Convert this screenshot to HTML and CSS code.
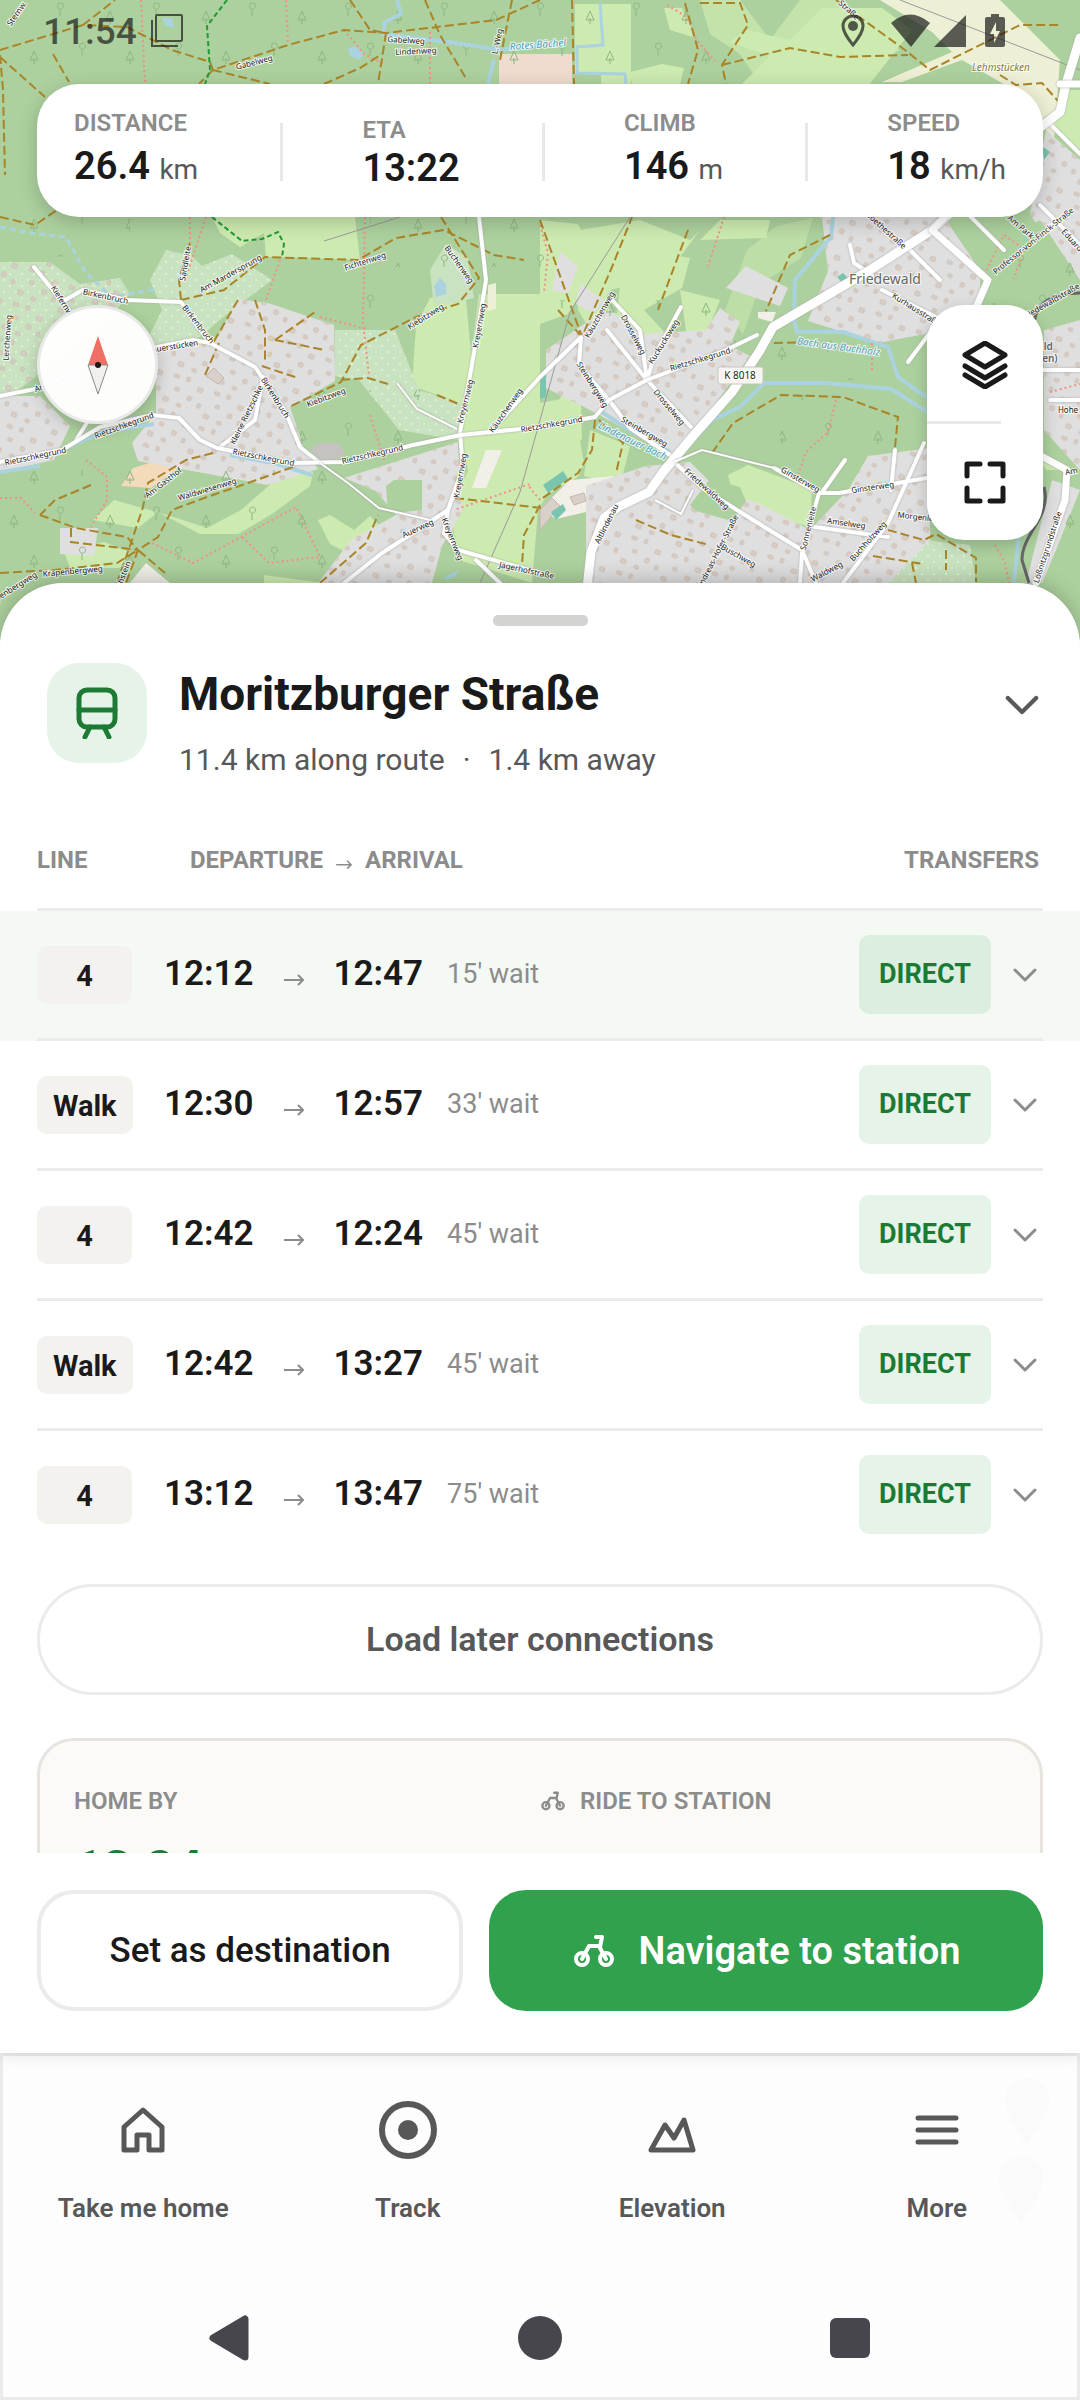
FILE: index.html
```html
<!DOCTYPE html>
<html lang="en">
<head>
    <meta charset="UTF-8">
    <meta name="viewport" content="width=device-width, initial-scale=1.0">
    <title>Moritzburger Straße</title>
    <link rel="stylesheet" href="styles.css">
</head>
<body>
    <!-- Shared icons -->
    <svg class="sprite" aria-hidden="true">
        <symbol id="chevron" viewBox="0 0 24 24"><path d="M2 7l10 10 10-10"/></symbol>
        <symbol id="arrow" viewBox="0 0 20 28"><path d="M0 20h19M14 15l5 5-5 5"/></symbol>
        <symbol id="bike" viewBox="0 0 44 36">
            <circle cx="10" cy="26" r="6"/>
            <circle cx="34" cy="26" r="6"/>
            <path d="M10 26l7-13h10l7 13M28 14l2-10h-6"/>
        </symbol>
    </svg>

    <div class="app">
        <!-- Map with everything that floats over it -->
        <section class="map-area">
            <svg class="map" viewBox="0 0 1080 640" preserveAspectRatio="xMidYMin slice" role="img" aria-label="Map of Friedewald">
                <defs>
                    <pattern id="trees" width="96" height="84" patternUnits="userSpaceOnUse">
                        <path class="tree" d="M14 24v-6m-4 2l4-9 4 9zM60 16v-7m0 0a3 3 0 1 1 1 0M34 64v-6m-4 2l4-9 4 9zM82 56v-7m0 0a3 3 0 1 1 1 0"/>
                    </pattern>
                    <pattern id="houses" width="44" height="38" patternUnits="userSpaceOnUse" patternTransform="rotate(24)">
                        <path class="house" d="M4 4h5v3h-5zM17 2h3v4h-3zM31 7h5v4h-5zM10 16h4v3h-4zM25 19h4v4h-4zM37 22h3v4h-3zM3 29h5v4h-5zM18 30h4v3h-4z"/>
                    </pattern>
                    <pattern id="dots" width="12" height="12" patternUnits="userSpaceOnUse">
                        <path d="M3 3h2v2h-2zM9 9h2v2h-2z" fill="#ddf0d4"/>
                    </pattern>
                </defs>
                <rect width="1080" height="640" fill="#add19e"/>

                <!-- Meadows and fields -->
                <g fill="#cdebb0">
                    <path d="M212 217h143l5 43-80-3-14 0-2-24-24 14-20-14z"/>
                    <path d="M575 4h56v80h-30v-10h-26z"/>
                    <path d="M630 72l32-8 22 4-4 16h-48zM664 8h18l14 30-26-8zM746 30l44 10 32-32 60 0 30 22-44 56h-128l30-30-40-14z"/>
                    <path d="M700 0h40l30 40 30-40h40l60 50-60 34h-80l-20-30-30-20z" opacity=".7"/>
                    <path d="M430 298l35-10 6 66 8-60h61v140l-78 6-10-40-40-14 4-60z"/>
                    <path d="M462 440l78-12 40-60 2 70-44 72-6 73-70-22-14-50 20-40z"/>
                    <path d="M93 520l21-20 50 14 43 14 34-18 48-42 24 4-3 14-38 28-34 20h-38l-42-22-20 16z"/>
                    <path d="M540 220l38 4 20 40-30 50-28 10zM622 270l20-20 48 8-8 30-38 22 22 24-26 20-24-34zM680 290l40 10-20 50-12-6zM700 240l20-20h50l-4 18z"/>
                    <path d="M580 230l60-10 50 20 10-10-34 46-56 14-20 40-12-20z"/>
                    <path d="M725 310l22-60 30-24 36-8-12 40-40 26-18 50z" opacity=".5"/>
                    <path d="M540 403l32-6 12 66-6 14-38 22zM590 430l40 16-10 40-36-10z"/>
                    <path d="M728 475l20-10 64 24-2 38-74-20zM760 560l10-40h28l-20 63h-16zM604 546l30-6 40 26-10 17h-74z"/>
                    <path d="M318 520l12-5 24 15 16-14 10 10-30 28-20-10z"/>
                    <path d="M1052 130l28 20v-60h-20zM1040 460l20 10-14 0z"/>
                    <path d="M64 552l40-10 26 10-10 16h-50zM264 575l60 8h-60z"/>
                </g>
                <path fill="#eef0d5" d="M880 0h120l60 60-6 80-40-50-52-30-60 22h-20l70-30-20-20z"/>
                <path fill="#eef0d5" d="M488 285l8-2v26l-8 2z"/>
                <path fill="#f2efe9" d="M486 450h16l-16 38h-14zM570 480l56-5-10 30-60 14-16-10zM0 424l14 8 2 12-16 4zM130 583l16-20 24 20zM758 312h18l-4 10-14-4z"/>
                <path fill="#f2dabb" d="M121 486l12-18 20-6 28 4-30 22z"/>
                <path fill="#f0dccf" d="M499 54h73v30h-73z"/>

                <!-- Gardens -->
                <g>
                    <path fill="#c9e2bf" d="M0 262h50l30 22 40-6 10 16-26 30-104 80zM150 280l16-30 26 6 10 10 30-12 40 26-40 30-60 50-30-10 20-40zM430 270l16-26 22 14 6 40-40 10zM335 330h60l24 60 44 14-4 36-60-10-40-50-24-4zM850 583l30-48 90 10 6 38z"/>
                    <path fill="url(#dots)" d="M0 262h50l30 22 40-6 10 16-26 30-104 80zM150 280l16-30 26 6 10 10 30-12 40 26-40 30-60 50-30-10 20-40zM335 330h60l24 60 44 14-4 36-60-10-40-50-24-4zM850 583l30-48 90 10 6 38z"/>
                </g>

                <!-- Built-up areas -->
                <g>
                    <path fill="#e0dfdf" d="M156 347l59-6 23-42 30 4 66 22 1 56-45 26 14 42 14 20-50 16-130-24-6-18 24-30zM0 396l40 0 30 30-16 34-54 12zM344 478l114-36 4 70-20 34-10 37h-114l34-44 44-24-20-24zM546 350l62-42 34 26 64-4 14-22 20 14-10 24 20 10-58 80-18 20-84-46-44-22zM586 486l60-20 44-4 26 26 44 16 50 26 38-40 20-34 62-8v92l-60 62H586zM822 217h122l42 62-14 40-32 12-62 12-70-22 20-50zM746 266l42 22-8 18-54-18zM560 252l18 14-10 28-16-4zM580 284l24 16-10 14-18-10zM1046 130l34 30v150l-20 20-16-20 16-50-30-46zM1044 320h36v150l-36-40zM60 528h38l-4 28-34-2zM1052 480l28 10-24 60-14 33h-16z"/>
                    <path fill="url(#houses)" d="M156 347l59-6 23-42 30 4 66 22 1 56-45 26 14 42 14 20-50 16-130-24-6-18 24-30zM0 396l40 0 30 30-16 34-54 12zM0 262h50l30 22 40-6 10 16-26 30-104 80zM344 478l114-36 4 70-20 34-10 37h-114l34-44 44-24-20-24zM546 350l62-42 34 26 64-4 14-22 20 14-10 24 20 10-58 80-18 20-84-46-44-22zM586 486l60-20 44-4 26 26 44 16 50 26 38-40 20-34 62-8v92l-60 62H586zM822 217h122l42 62-14 40-32 12-62 12-70-22 20-50zM1046 130l34 30v150l-20 20-16-20 16-50-30-46zM1044 320h36v150l-36-40z"/>
                </g>
                <path fill="#add19e" d="M386 486l8-6h28v30l-34 4zM980 250l60-30 40 60v40l-70 20-30-20zM690 505l20-26 30 8 6 14-14 20-36-10z"/>
                <path fill="#c5c3c0" d="M310 448l10-5h18l7 10-8 8-20-2z"/>
                <path fill="#d9d0c9" stroke="#c4b6ab" d="M540 510l12-12 8 8-20 24zM206 376l8-8 10 10-6 6zM570 497l14-4 2 8-12 4z"/>
                <path fill="url(#trees)" d="M0 0h720v84H0zM0 217h130v40H0zM370 217h180v50h-180zM360 290h50v50h-50zM300 390h120v60h-120zM0 470h330v113H0zM780 395h110v65h-110zM730 340h130v40h-130zM980 250h100v60h-100zM560 300h180v20h-180zM1050 480h30v100h-30z"/>

                <!-- Water -->
                <g class="water">
                    <path d="M397 0l4 14-16 8-2 12 80 10 38 6 40-6M494 60l-6 24M60 450l44-18 50-8M0 472l40-6M230 455l44 8 38 12M833 217l-2 20-36 43-1 40 3 12h46l45 15 10 30 28 20M678 457l34-37 28-13 24-24h62l65 6 35 22M602 412l30 20 38 20M1014 583l6-60 22-40"/>
                    <path class="ditch" d="M600 3l3 42-26 2v26l48 1 1 12"/>
                </g>
                <path class="brook" d="M0 227l30 6 36 4 20 36 26 24 44-8"/>
                <path fill="#aad3df" d="M348 48l8-2 8 8-4 6-10-4zM434 286l6-8 6 6v10l-10 3zM444 578l14-8-2 6-10 4zM162 18h10l2 10-8-2z"/>
                <path fill="#7ac5b0" d="M543 485l20-14 5 8-20 14zM551 512l12-8 3 6-10 10zM540 376l6-3v24l-6 2zM837 277l6-4 8 8-3 8zM1042 146l8 6-6 8z"/>

                <!-- Footpaths -->
                <path class="path" d="M141 0l4 84M286 0l2 45M430 32v52M344 30l20 24 20 10M667 5l20 12 10 24 18 20M190 217v26M206 217l-22 66M365 217l-2 106 6 52M540 225l8 28-4 40M0 498h21l14 15M86 460l21 17v23l-16 27M152 543l41 20 48-26 55-30 24 50-51 6-28-27M320 317l46 12M370 415l14 45M724 217l-16 50M836 400l-8 32-22 20-8 24M872 370v-30M984 275l20-40 20 14-10 30M995 545l10 18 4 20M1050 392l30-8M280 260l-14 40M540 500l-10-12 0-4-76 26"/>

                <!-- Forest tracks -->
                <g class="track-line">
                    <path d="M0 50l83-25 44 2 45 23 38 12 3 8 75-25 56-15 42 3 110-13 44-20M213 70l57 14M213 70l-14 14M83 25l32-25M350 0l20 30 16 3-8 51M425 0l15 35 27 45M512 0l-12 60M324 84l36-16 22-14M0 55l3 35 2 85M0 57l45 40M53 54l16 28M572 0l2 84M685 3l13 47-10 34M700 3l40 0 8 22-26 40 4 19M722 65l68-17 50 9 68-2M836 0l69 50 25 20 70-35 20-10h40M1000 75l16 10 26-2 16 18M0 217l35 8 22-15M181 300l43-10 41-33 93 3 38-22 48-8 50 25 30 5M181 300l-2-20 11-37M441 217l38 61-21 26-42 13-55 28-20 37-52 25M238 300l-25 43M255 300l10 30v33M275 340l40-28M275 340l50 10M262 366l36 12M341 380l27-2 20 6M205 375l14-32M437 395l24 10M293 467l-45 16-41 14-35 13-14 27-20 13-12 33M213 453l-27 7-38 23-5 24-12 36-14 40M40 515l36 13 51 9 11 13M71 528v14l67 8M91 485l-36 15-15 15M0 573l55-3 62-7 21-13 27 23M774 343l41-1M712 453l21-30 48-28 62 2 55 20-3 30M636 520l35 15 38 10M595 420l-3 30-14 23-38 27M599 420l24 23-7 30M540 220l42 117 30-70 20-50M688 230l-30 80M830 235l-40 20-24 56M558 310l24 27M320 583l46-40 12-28M455 498l86 10M540 505l-16 30-2 30M873 556l50 8M912 563l4 20M888 530l36 10 12-6 40 24v24M946 550v20"/>
                </g>
                <path class="hike" d="M227 0l-20 26 3 44-5 14M212 217l30 24 20-2 16-7 6 12-2 13"/>
                <path class="power" d="M630 217l-60 95-50 180-40 91M400 217l-76 24M900 0l180 70"/>

                <!-- Roads -->
                <g class="roads">
                    <path d="M34 267l35 43M65 300l18-10 44 10 54 2 12 18 17 23 45 24 31 46 14 34 20 16M157 347l36-7 17 3M263 377l-8 43-35 27M76 440l14-22M0 396l40-8M489 433l51-56 41-40M612 300l28 30 7 50 44 47M607 330l40 50M647 380l7-23 27-50M581 337l-2 28 30 35 21 28 40 27M674 462l31 28 48 30 49 30 14 33M774 468l45 25h20l88-15M819 493l-17 60-2 30M924 443l-36 80-45 60M845 460l-22 31M895 450l-4 40M815 527l73 10M944 190l60 60M1040 205l40 40M1046 120l34 34M910 250l30 30M850 245l4 18 18 12M882 290l60 30M938 322l-30 40M479 217l7 63-11 67-15 86 3 34-15 43-4 23 14 17 82 23M448 510l-35 23-31 20-38 30M1050 400h30M1044 370h36M476 560l24 23"/>
                    <path d="M0 462l62-12 38-23 52-12 27 3 21 22 17 8 76 15 51-1 69-17 48-10 79-8 55-10 14-17 38-20 79-30 31-15"/>
                    <path class="trunk" d="M1080 38l-14 46-6 28-18 14-110 104-62 40-97 57-14 25-27 40-38 43-31 37-14 20-31 15-14 11-13 34-4 36"/>
                    <path class="side" d="M1060 84h20M945 217l-13 13 56 50-13 30-5 30M1043 457l24 13-2 30-29 83"/>
                </g>
                <path class="lane" d="M320 463l28 20 31 25 51 12M397 383l20 26 40 20M702 450l72 18M674 462l28-12M655 500l26 14 12-24"/>
                <path class="rail" d="M1034 323c2-20 18-30 46-30M1044 487c8 30-22 46-22 73l7 23"/>

                <!-- Names -->
                <g class="names">
                    <text transform="translate(19 15) rotate(-55)">Sternw.</text>
                    <text transform="translate(255 65) rotate(-15)">Gabelweg</text>
                    <text transform="translate(406 43) rotate(3)">Gabelweg</text>
                    <text transform="translate(416 54) rotate(-3)">Lindenweg</text>
                    <text transform="translate(500 42) rotate(-78)">L.-Weg</text>
                    <text transform="translate(847 12) rotate(42)">Straße</text>
                    <text transform="translate(188 264) rotate(-80)">Sandleite</text>
                    <text transform="translate(232 276) rotate(-29)">Am Mardersprung</text>
                    <text transform="translate(366 264) rotate(-18)">Fichtenweg</text>
                    <text transform="translate(457 266) rotate(55)">Buchenweg</text>
                    <text transform="translate(105 299) rotate(12)">Birkenbruch</text>
                    <text transform="translate(62 306) rotate(58)">Kiefernweg</text>
                    <text transform="translate(10 338) rotate(-86)">Lerchenweg</text>
                    <text transform="translate(60 384) rotate(-18)">Am Lärmberg</text>
                    <text transform="translate(168 350) rotate(-9)">Am Auerstücken</text>
                    <text transform="translate(196 326) rotate(52)">Birkenbruch</text>
                    <text transform="translate(273 399) rotate(58)">Birkenbruch</text>
                    <text transform="translate(427 319) rotate(-32)">Kiebitzweg</text>
                    <text transform="translate(327 400) rotate(-21)">Kiebitzweg</text>
                    <text transform="translate(249 416) rotate(-64)">Kleine Rietzschke</text>
                    <text transform="translate(125 428) rotate(-20)">Rietzschkegrund</text>
                    <text transform="translate(36 459) rotate(-12)">Rietzschkegrund</text>
                    <text transform="translate(263 460) rotate(11)">Rietzschkegrund</text>
                    <text transform="translate(373 457) rotate(-13)">Rietzschkegrund</text>
                    <text transform="translate(552 427) rotate(-10)">Rietzschkegrund</text>
                    <text transform="translate(701 362) rotate(-17)">Rietzschkegrund</text>
                    <text transform="translate(165 485) rotate(-38)">Am Gasthof</text>
                    <text transform="translate(208 492) rotate(-17)">Waldwiesenweg</text>
                    <text transform="translate(482 326) rotate(-80)">Kreyernweg</text>
                    <text transform="translate(468 402) rotate(-76)">Kreyernweg</text>
                    <text transform="translate(463 476) rotate(-80)">Kreyernweg</text>
                    <text transform="translate(450 540) rotate(68)">Kreyernweg</text>
                    <text transform="translate(508 412) rotate(-55)">Käuzchenweg</text>
                    <text transform="translate(602 316) rotate(-60)">Käuzchenweg</text>
                    <text transform="translate(419 531) rotate(-25)">Auerweg</text>
                    <text transform="translate(526 573) rotate(12)">Jägerhofstraße</text>
                    <text transform="translate(73 574) rotate(-5)">Krapenbergweg</text>
                    <text transform="translate(12 592) rotate(-32)">Krapenbergweg</text>
                    <text transform="translate(124 580) rotate(-68)">Hochstein</text>
                    <text transform="translate(631 336) rotate(62)">Drosselweg</text>
                    <text transform="translate(667 409) rotate(50)">Drosselweg</text>
                    <text transform="translate(666 343) rotate(-58)">Kuckucksweg</text>
                    <text transform="translate(590 386) rotate(58)">Steinbergweg</text>
                    <text transform="translate(643 434) rotate(30)">Steinbergweg</text>
                    <text transform="translate(609 525) rotate(-63)">Altlindenau</text>
                    <text transform="translate(705 491) rotate(42)">Friedewaldweg</text>
                    <text transform="translate(720 553) rotate(-63)">Andreas-Hofer-Straße</text>
                    <text transform="translate(737 558) rotate(30)">Buschweg</text>
                    <text transform="translate(799 482) rotate(30)">Ginsterweg</text>
                    <text transform="translate(873 490) rotate(-8)">Ginsterweg</text>
                    <text transform="translate(811 529) rotate(-76)">Sonnenleite</text>
                    <text transform="translate(846 526) rotate(8)">Amselweg</text>
                    <text transform="translate(920 520) rotate(6)">Morgenleite</text>
                    <text transform="translate(870 543) rotate(-48)">Buchholzweg</text>
                    <text transform="translate(828 574) rotate(-28)">Waldweg</text>
                    <text transform="translate(915 312) rotate(32)">Kurhausstraße</text>
                    <text transform="translate(884 232) rotate(42)">Goethestraße</text>
                    <text transform="translate(1019 229) rotate(40)">Am Park</text>
                    <text transform="translate(1035 243) rotate(-39)">Professor-von-Finck-Straße</text>
                    <text transform="translate(1070 242) rotate(48)">Eduard</text>
                    <text transform="translate(1052 304) rotate(-30)">Friedewaldstraße</text>
                    <text transform="translate(1068 413)">Hohe</text>
                    <text transform="translate(1072 474) rotate(-12)">Am</text>
                    <text transform="translate(1050 548) rotate(-72)">Lößnitzgrundstraße</text>
                    <text class="place" x="885" y="284">Friedewald</text>
                    <text class="halt" x="1026" y="350">Friedewald</text>
                    <text class="halt" x="1034" y="362">(Dresden)</text>
                    <text class="field" x="1001" y="71">Lehmstücken</text>
                    <text class="stream" transform="translate(538 48) rotate(-4)">Rotes Bächel</text>
                    <text class="stream" transform="translate(838 350) rotate(8)">Bach aus Buchholz</text>
                    <text class="stream" transform="translate(631 444) rotate(26)">Lindenauer Bach</text>
                    <rect class="shield" x="718" y="367" width="45" height="17" rx="2"/>
                    <text class="ref" x="740" y="379">K 8018</text>
                </g>
            </svg>

            <div class="overlay">
                <div class="status-bar">
                    <div class="status-left">
                        <span>11:54</span>
                        <svg class="status-icon" viewBox="0 0 32 34" fill="none" stroke="currentColor" stroke-width="2"><rect x="5" y="1" width="26" height="26" rx="1"/><path d="M1 6v26h26"/></svg>
                    </div>
                    <div class="status-right">
                        <svg class="pin" viewBox="0 0 24 34"><path d="M12 2a10 10 0 0 0-10 10c0 7 10 19 10 19s10-12 10-19a10 10 0 0 0-10-10z" fill="none" stroke="currentColor" stroke-width="3"/><circle cx="12" cy="12" r="5" fill="currentColor"/></svg>
                        <svg class="signal" viewBox="0 0 76 34" fill="currentColor"><path d="M0 9Q19-8 39 9L20 33zM75 1v32H43z"/></svg>
                        <svg class="battery" viewBox="0 0 20 34"><path fill="currentColor" fill-rule="evenodd" d="M6 0h8v3h4q2 0 2 2v26q0 2-2 2H2q-2 0-2-2V5q0-2 2-2h4zM11 8l-6 12h4v9l6-12h-4z"/></svg>
                    </div>
                </div>

                <div class="stats">
                    <div class="stat">
                        <span class="label">DISTANCE</span>
                        <span class="stat-value">26.4 <small>km</small></span>
                    </div>
                    <div class="stat">
                        <span class="label">ETA</span>
                        <span class="stat-value plain">13:22</span>
                    </div>
                    <div class="stat">
                        <span class="label">CLIMB</span>
                        <span class="stat-value">146 <small>m</small></span>
                    </div>
                    <div class="stat">
                        <span class="label">SPEED</span>
                        <span class="stat-value">18 <small>km/h</small></span>
                    </div>
                </div>

                <div class="map-controls">
                    <button class="compass" type="button" aria-label="Reset north">
                        <svg viewBox="0 0 24 60"><path d="M12 1L2 30h20z" fill="#f07067"/><path d="M2 30l10 29 10-29z" fill="#f2f0ec" stroke="#8a8a8a"/><circle cx="12" cy="30" r="3" fill="#1a1a1a"/></svg>
                    </button>
                    <div class="map-tools">
                        <button type="button" aria-label="Map layers">
                            <svg viewBox="0 0 46 48"><path d="M23 2L3 14l20 12 20-12zM3 25l20 12 20-12M3 34l20 12 20-12"/></svg>
                        </button>
                        <button type="button" aria-label="Full screen">
                            <svg viewBox="0 0 46 48"><path d="M5 18V6h13M28 6h13v12M41 30v13H28M18 43H5V30"/></svg>
                        </button>
                    </div>
                </div>
            </div>
        </section>

        <!-- Station sheet -->
        <main class="sheet">
            <div class="handle"></div>

            <div class="sheet-scroll">
                <header class="station">
                    <div class="station-icon">
                        <svg viewBox="0 0 44 52"><rect x="4" y="3" width="36" height="37" rx="8"/><path d="M4 23h36M15 40l-5 10M29 40l5 10"/></svg>
                    </div>
                    <div class="station-text">
                        <h1>Moritzburger Straße</h1>
                        <p><span>11.4 km along route</span><span>·</span><span>1.4 km away</span></p>
                    </div>
                    <button class="icon-button" type="button" aria-label="Collapse">
                        <svg class="chevron large"><use href="#chevron"/></svg>
                    </button>
                </header>

                <table class="departures">
                    <thead>
                        <tr>
                            <th class="col-line" scope="col">LINE</th>
                            <th class="col-times" scope="col"><div class="route-head">DEPARTURE<svg class="arrow small"><use href="#arrow"/></svg>ARRIVAL</div></th>
                            <th class="col-transfers" scope="col">TRANSFERS</th>
                        </tr>
                    </thead>
                    <tbody>
                        <tr class="best">
                            <td><span class="line">4</span></td>
                            <td><div class="times"><b>12:12</b><svg class="arrow"><use href="#arrow"/></svg><b>12:47</b><span class="wait">15' wait</span></div></td>
                            <td><div class="transfers"><span class="direct">DIRECT</span><button class="icon-button" type="button" aria-label="Details"><svg class="chevron"><use href="#chevron"/></svg></button></div></td>
                        </tr>
                        <tr>
                            <td><span class="line">Walk</span></td>
                            <td><div class="times"><b>12:30</b><svg class="arrow"><use href="#arrow"/></svg><b>12:57</b><span class="wait">33' wait</span></div></td>
                            <td><div class="transfers"><span class="direct">DIRECT</span><button class="icon-button" type="button" aria-label="Details"><svg class="chevron"><use href="#chevron"/></svg></button></div></td>
                        </tr>
                        <tr>
                            <td><span class="line">4</span></td>
                            <td><div class="times"><b>12:42</b><svg class="arrow"><use href="#arrow"/></svg><b>12:24</b><span class="wait">45' wait</span></div></td>
                            <td><div class="transfers"><span class="direct">DIRECT</span><button class="icon-button" type="button" aria-label="Details"><svg class="chevron"><use href="#chevron"/></svg></button></div></td>
                        </tr>
                        <tr>
                            <td><span class="line">Walk</span></td>
                            <td><div class="times"><b>12:42</b><svg class="arrow"><use href="#arrow"/></svg><b>13:27</b><span class="wait">45' wait</span></div></td>
                            <td><div class="transfers"><span class="direct">DIRECT</span><button class="icon-button" type="button" aria-label="Details"><svg class="chevron"><use href="#chevron"/></svg></button></div></td>
                        </tr>
                        <tr>
                            <td><span class="line">4</span></td>
                            <td><div class="times"><b>13:12</b><svg class="arrow"><use href="#arrow"/></svg><b>13:47</b><span class="wait">75' wait</span></div></td>
                            <td><div class="transfers"><span class="direct">DIRECT</span><button class="icon-button" type="button" aria-label="Details"><svg class="chevron"><use href="#chevron"/></svg></button></div></td>
                        </tr>
                    </tbody>
                </table>

                <button class="load-more" type="button">Load later connections</button>

                <div class="summary">
                    <div>
                        <div class="label">HOME BY</div>
                        <div class="home-time">13:24</div>
                    </div>
                    <div>
                        <div class="label with-icon"><svg class="bike small"><use href="#bike"/></svg>RIDE TO STATION</div>
                    </div>
                </div>
            </div>

            <div class="actions">
                <button class="secondary" type="button">Set as destination</button>
                <button class="primary" type="button"><svg class="bike"><use href="#bike"/></svg>Navigate to station</button>
            </div>
        </main>

        <!-- Bottom navigation -->
        <footer class="bottom">
            <nav class="tabs">
                <a href="#home">
                    <svg viewBox="0 0 60 60"><path d="M30 10L11 27v23h13V35h12v15h13V27z"/></svg>
                    Take me home
                </a>
                <a href="#track">
                    <svg viewBox="0 0 60 60"><circle cx="30" cy="30" r="26" stroke-width="6"/><circle cx="30" cy="30" r="10" fill="currentColor" stroke="none"/></svg>
                    Track
                </a>
                <a href="#elevation">
                    <svg viewBox="0 0 60 60"><path d="M9 50l14-25 9 13 10-18 9 30z"/></svg>
                    Elevation
                </a>
                <a href="#more">
                    <svg viewBox="0 0 60 60"><path d="M11 18h38M11 30h38M11 42h38"/></svg>
                    More
                </a>
            </nav>
            <div class="system-nav">
                <button type="button" aria-label="Back"><svg viewBox="0 0 46 46"><path d="M6 23L38 4v38z" stroke="currentColor" stroke-width="7" stroke-linejoin="round"/></svg></button>
                <button type="button" aria-label="Home"><svg viewBox="0 0 46 46"><circle cx="23" cy="23" r="22"/></svg></button>
                <button type="button" aria-label="Recents"><svg viewBox="0 0 46 46"><rect x="3" y="3" width="40" height="40" rx="6"/></svg></button>
            </div>
            <!-- Map pins showing through the bar -->
            <svg class="pins" viewBox="0 0 60 150" aria-hidden="true"><path d="M34 70C20 46 12 38 12 24a22 22 0 0 1 44 0c0 14-8 22-22 46zM28 148C14 124 6 116 6 102a22 22 0 0 1 44 0c0 14-8 22-22 46z"/></svg>
        </footer>
    </div>
</body>
</html>
```
FILE: styles.css
```css
* {
    box-sizing: border-box;
}

body {
    margin: 0;
    font-family: Roboto, "Liberation Sans", sans-serif;
    color: #1a1a1a;
    background-color: #fff;
}

button {
    padding: 0;
    border: none;
    background: none;
    font-family: inherit;
    color: inherit;
    cursor: pointer;
}

svg {
    display: block;
}

.sprite {
    position: absolute;
    width: 0;
    height: 0;
}

.app {
    display: flex;
    flex-direction: column;
    height: 100vh;
}

/* Map */
.map-area {
    display: grid;
    flex: none;
}

.map,
.overlay {
    grid-area: 1 / 1;
}

.map {
    width: 100%;
    height: 640px;
}

.tree {
    fill: none;
    stroke: #8bb680;
    stroke-width: 1;
}

.house {
    fill: #d9d0c9;
    stroke: #cdbfb3;
}

.water path {
    fill: none;
    stroke: #aad3df;
    stroke-width: 4;
}

.water .ditch {
    stroke-width: 3;
}

.brook {
    fill: none;
    stroke: #aad3df;
    stroke-width: 3;
    stroke-dasharray: 6 4;
}

.path {
    fill: none;
    stroke: #ef9184;
    stroke-width: 2;
    stroke-dasharray: 2 3;
}

.track-line path {
    fill: none;
    stroke: #a98428;
    stroke-width: 2;
    stroke-dasharray: 9 4;
}

.hike {
    fill: none;
    stroke: #1f9a33;
    stroke-width: 2;
    stroke-dasharray: 5 3;
}

.power {
    fill: none;
    stroke: #9a9a9a;
}

.roads path {
    fill: none;
    stroke: #fff;
    stroke-width: 4;
    stroke-linecap: round;
    stroke-linejoin: round;
    filter: drop-shadow(0 0 1px #aaa);
}

.roads .trunk {
    stroke-width: 9;
}

.roads .side {
    stroke-width: 7;
}

.lane {
    fill: none;
    stroke: #fff;
    stroke-width: 2;
    filter: drop-shadow(0 0 1px #999);
}

.rail {
    fill: none;
    stroke: #666;
    stroke-width: 3;
}

.names text {
    font-family: "Noto Sans", sans-serif;
    font-size: 8px;
    text-anchor: middle;
    fill: #222;
    stroke: rgba(255, 255, 255, 0.8);
    stroke-width: 2;
    paint-order: stroke;
}

.names .place {
    font-size: 14px;
    fill: #666;
}

.names .halt {
    font-size: 10px;
    font-weight: 600;
    fill: #666;
}

.names .ref {
    font-size: 10px;
}

.names .field {
    font-size: 10px;
    font-style: italic;
    fill: #8a7a3c;
}

.names .stream {
    font-size: 10px;
    font-style: italic;
    fill: #4a9fc0;
}

.names .shield {
    fill: #f7f5f2;
    stroke: #c9c5be;
}

/* Status bar */
.overlay {
    z-index: 1;
    display: flex;
    flex-direction: column;
    padding: 0 37px;
}

.status-bar {
    display: flex;
    justify-content: space-between;
    align-items: center;
    height: 84px;
    padding: 0 38px 22px 6px;
    font-size: 37px;
    font-weight: 500;
    color: rgba(25, 25, 25, 0.7);
}

.status-left,
.status-right {
    display: flex;
    align-items: center;
}

.status-left {
    gap: 14px;
}

.status-icon {
    width: 32px;
    height: 34px;
}

.pin {
    width: 24px;
    height: 34px;
    margin-right: 26px;
}

.signal {
    width: 76px;
    height: 34px;
    margin-right: 18px;
}

.battery {
    width: 20px;
    height: 34px;
}

/* Ride stats */
.stats {
    display: flex;
    justify-content: space-between;
    align-items: center;
    height: 133px;
    padding: 6px 37px 0;
    border-radius: 42px;
    background-color: #fff;
    box-shadow: 0 5px 20px rgba(0, 0, 0, 0.2);
}

.stat {
    display: flex;
    flex-direction: column;
}

.stat + .stat {
    position: relative;
}

.stat + .stat::before {
    content: "";
    position: absolute;
    top: 50%;
    left: -82px;
    width: 3px;
    height: 58px;
    margin-top: -31px;
    background-color: #e8e8e8;
}

.label {
    font-size: 24px;
    line-height: 28px;
    font-weight: 600;
    color: #8c8c8c;
}

.stat-value {
    font-size: 38px;
    line-height: 58px;
    font-weight: 600;
}

.stat-value.plain {
    line-height: 48px;
}

.stat-value small {
    font-size: 28px;
    font-weight: 400;
    color: #585858;
}

/* Compass and map buttons */
.map-controls {
    display: flex;
    justify-content: space-between;
    align-items: flex-start;
    margin-top: 88px;
}

.compass {
    display: flex;
    justify-content: center;
    align-items: center;
    width: 121px;
    height: 119px;
    border: 3px solid #e8e8e8;
    border-radius: 50%;
    background-color: rgba(255, 255, 255, 0.97);
    box-shadow: 0 5px 16px rgba(0, 0, 0, 0.2);
}

.compass svg {
    width: 24px;
    height: 60px;
}

.map-tools {
    display: flex;
    flex-direction: column;
    width: 116px;
    border-radius: 37px;
    background-color: #fff;
    box-shadow: 0 5px 16px rgba(0, 0, 0, 0.2);
}

.map-tools button {
    display: flex;
    justify-content: center;
    align-items: center;
    height: 116px;
}

.map-tools button:first-child {
    height: 119px;
    background: linear-gradient(#e8e8e8, #e8e8e8) left bottom / 74px 3px no-repeat;
}

.map-tools svg {
    width: 46px;
    height: 48px;
    fill: none;
    stroke: #1a1a1a;
    stroke-width: 5;
    stroke-linejoin: round;
    stroke-linecap: round;
}

/* Station sheet */
.sheet {
    z-index: 2;
    display: flex;
    flex: 1;
    flex-direction: column;
    min-height: 0;
    margin-top: -57px;
    padding-top: 32px;
    border-radius: 63px 63px 0 0;
    background-color: #fff;
    box-shadow: 0 -4px 20px rgba(0, 0, 0, 0.2);
}

.handle {
    flex: none;
    align-self: center;
    width: 95px;
    height: 11px;
    border-radius: 5px;
    background-color: #d3d3d1;
}

.sheet-scroll {
    flex: 1;
    min-height: 0;
    padding: 0 37px;
    overflow: hidden;
}

.station {
    display: flex;
    align-items: flex-start;
    height: 186px;
    padding: 37px 0 0 10px;
}

.station-icon {
    display: flex;
    justify-content: center;
    align-items: center;
    width: 100px;
    height: 100px;
    border-radius: 32px;
    background-color: #e6f3e8;
}

.station-icon svg {
    width: 44px;
    height: 52px;
    fill: none;
    stroke: #1d7a34;
    stroke-width: 5;
    stroke-linecap: round;
}

.station-text {
    flex: 1;
    padding-left: 32px;
}

h1 {
    margin: 0;
    font-size: 46px;
    line-height: 62px;
    font-weight: 700;
}

.station p {
    display: flex;
    gap: 18px;
    margin: 10px 0 0;
    font-size: 30px;
    line-height: 50px;
    color: #585858;
}

.icon-button {
    display: flex;
    justify-content: center;
    align-items: center;
}

.station .icon-button {
    height: 84px;
    padding-right: 4px;
}

.chevron {
    width: 24px;
    height: 24px;
    fill: none;
    stroke: #8c8c8c;
    stroke-width: 3;
    stroke-linecap: round;
    stroke-linejoin: round;
}

.chevron.large {
    width: 34px;
    height: 34px;
    stroke: #585858;
}

/* Departures */
.departures {
    width: 100%;
    border-spacing: 0;
    table-layout: fixed;
}

.departures th,
.departures td {
    padding: 0;
    border-bottom: 3px solid #ebebeb;
    text-align: left;
}

.departures th {
    height: 99px;
    font-size: 24px;
    font-weight: 700;
    color: #8c8c8c;
}

.departures td {
    height: 130px;
}

.departures tbody tr:last-child td {
    border-bottom: none;
    padding-bottom: 3px;
}

.departures .col-line {
    width: 127px;
}

.departures .col-times {
    padding-left: 26px;
}

.departures .col-transfers {
    width: 240px;
    padding-right: 4px;
    text-align: right;
}

.route-head {
    display: flex;
    align-items: center;
    gap: 13px;
}

.best td {
    background-color: #f4f9f4;
}

.best td:first-child {
    box-shadow: -37px 0 0 #f4f9f4;
}

.best td:last-child {
    box-shadow: 37px 0 0 #f4f9f4;
}

.line {
    display: inline-block;
    min-width: 95px;
    padding: 2px 16px 0;
    border-radius: 10px;
    background-color: #f4f2ee;
    font-size: 29px;
    line-height: 56px;
    font-weight: 700;
    text-align: center;
}

.times {
    display: flex;
    align-items: center;
    padding-bottom: 2px;
}

.times b {
    font-size: 35px;
    font-weight: 600;
}

.arrow {
    width: 20px;
    height: 28px;
    margin: 0 30px;
    fill: none;
    stroke: #8c8c8c;
    stroke-width: 2;
}

.arrow.small {
    width: 16px;
    height: 22px;
    margin: 0;
}

.wait {
    margin-left: 24px;
    font-size: 27px;
    color: #8c8c8c;
}

.transfers {
    display: flex;
    justify-content: flex-end;
    align-items: center;
    gap: 22px;
    padding-right: 6px;
}

.direct {
    padding: 0 20px;
    border-radius: 10px;
    background-color: #e6f3e8;
    font-size: 27px;
    line-height: 79px;
    font-weight: 700;
    color: #1d7a34;
}

.best .direct {
    background-color: #dceee0;
}

.load-more {
    display: block;
    width: 100%;
    height: 111px;
    margin-top: 23px;
    padding-bottom: 2px;
    border: 3px solid #ebebeb;
    border-radius: 56px;
    font-size: 34px;
    font-weight: 600;
    color: #585858;
}

.summary {
    display: grid;
    grid-template-columns: 1fr 1fr;
    height: 260px;
    margin-top: 43px;
    padding: 46px 34px;
    border: 3px solid #e7e4df;
    border-radius: 37px;
    background-color: #fbfaf6;
}

.with-icon {
    display: flex;
    align-items: center;
    gap: 14px;
}

.home-time {
    margin-top: 20px;
    font-size: 50px;
    line-height: 68px;
    font-weight: 700;
    color: #1d7a34;
}

.bike {
    width: 44px;
    height: 36px;
    fill: none;
    stroke: #fff;
    stroke-width: 4;
    stroke-linejoin: round;
    stroke-linecap: round;
}

.bike.small {
    width: 26px;
    height: 22px;
    stroke: #8c8c8c;
}

/* Sheet buttons */
.actions {
    display: grid;
    flex: none;
    grid-template-columns: 10fr 13fr;
    gap: 26px;
    padding: 37px 37px 42px;
}

.actions button {
    display: flex;
    justify-content: center;
    align-items: center;
    height: 121px;
    border-radius: 37px;
}

.actions .secondary {
    border: 4px solid #ebebeb;
    font-size: 35px;
    font-weight: 500;
}

.actions .primary {
    gap: 23px;
    background-color: #30a14c;
    font-size: 38px;
    font-weight: 600;
    color: #fff;
}

/* Bottom navigation */
.bottom {
    position: relative;
    flex: none;
    height: 347px;
    border: 3px solid #ebebeb;
    background-color: #fdfdfd;
}

.pins {
    position: absolute;
    top: 20px;
    right: 24px;
    width: 60px;
    height: 150px;
    fill: #fafafa;
}

.tabs {
    display: flex;
    padding: 44px 8px 0;
}

.tabs a {
    display: flex;
    flex: 1;
    flex-direction: column;
    align-items: center;
    gap: 30px;
    font-size: 26px;
    line-height: 36px;
    font-weight: 600;
    color: #585858;
    text-decoration: none;
}

.tabs svg {
    width: 60px;
    height: 60px;
    fill: none;
    stroke: currentColor;
    stroke-width: 5;
    stroke-linecap: round;
    stroke-linejoin: round;
}

.system-nav {
    display: flex;
    justify-content: center;
    gap: 264px;
    margin-top: 89px;
    color: #46464c;
}

.system-nav svg {
    width: 46px;
    height: 46px;
    fill: currentColor;
}
```
